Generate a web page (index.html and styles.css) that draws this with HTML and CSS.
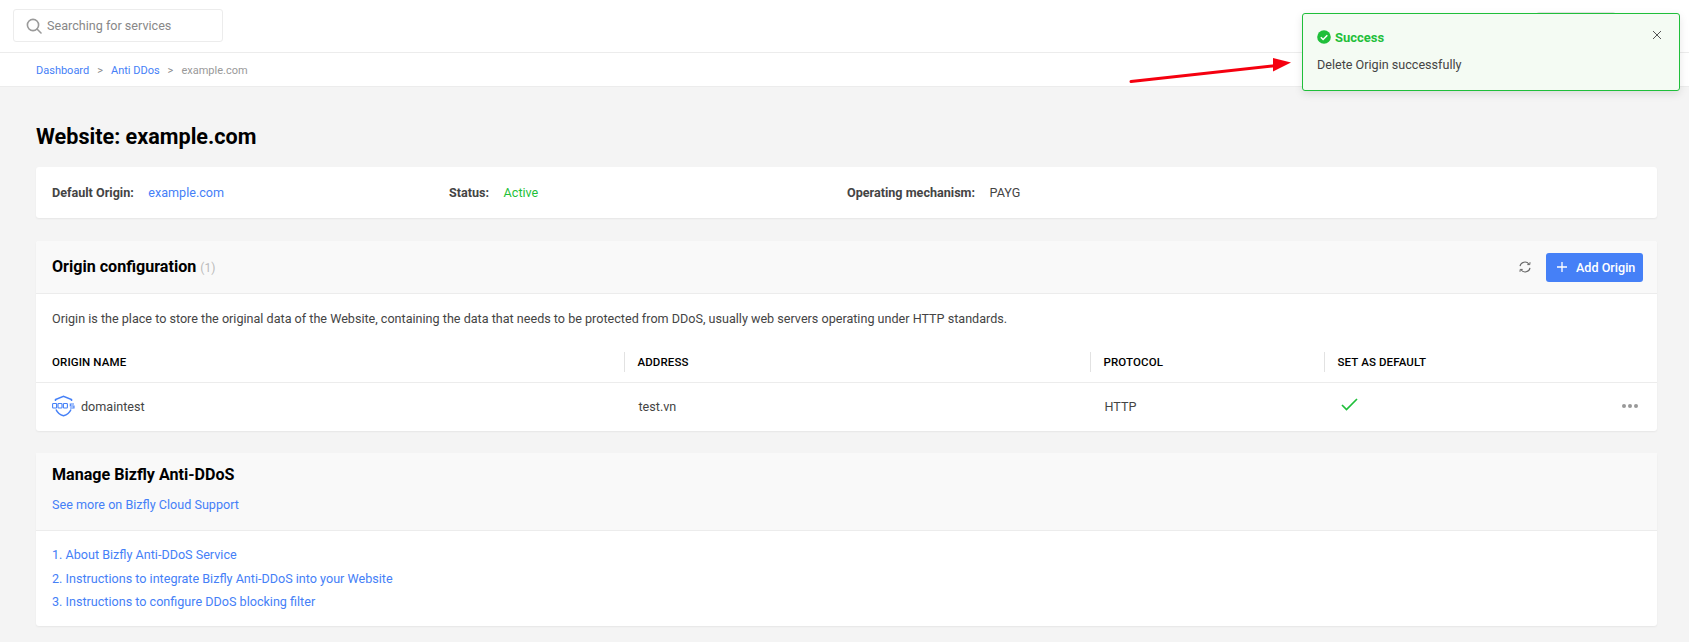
FILE: index.html
```html
<!DOCTYPE html>
<html lang="en">
<head>
<meta charset="utf-8">
<title>Website: example.com</title>
<link rel="stylesheet" href="styles.css">
</head>
<body>
<header class="topbar">
  <div class="search">
    <svg class="search-icon" width="16" height="16" viewBox="0 0 16 16" fill="none" stroke="#9a9a9a" stroke-width="1.6"><circle cx="7" cy="7" r="5.6"/><path d="M11 11l4 4" stroke-linecap="round"/></svg>
    <span>Searching for services</span>
  </div>
  <div class="top-button"></div>
</header>
<nav class="crumbs">
  <a>Dashboard</a><span class="sep">&gt;</span><a>Anti DDos</a><span class="sep">&gt;</span><span class="current">example.com</span>
</nav>
<main class="content">
  <h1 class="title">Website: example.com</h1>
  <section class="card info">
    <div class="info-item"><b>Default Origin:</b><a>example.com</a></div>
    <div class="info-item"><b>Status:</b><span class="active">Active</span></div>
    <div class="info-item"><b>Operating mechanism:</b><span>PAYG</span></div>
  </section>
  <section class="card origin">
    <div class="card-head">
      <h2>Origin configuration <small>(1)</small></h2>
      <div class="actions">
        <svg width="14" height="14" viewBox="0 0 14 14" fill="none" stroke="#666" stroke-width="1.1"><path d="M2 6.2A5 5 0 0 1 11 4.2M12 7.8A5 5 0 0 1 3 9.8"/><path d="M9.3 4.6h2.5l.2-2.4M4.7 9.4H2.2L2 11.8" stroke-width="1"/></svg>
        <button class="add" type="button"><svg width="12" height="12" viewBox="0 0 12 12" stroke="#fff" stroke-width="1.3"><path d="M6 1v10M1 6h10"/></svg>Add Origin</button>
      </div>
    </div>
    <p class="desc">Origin is the place to store the original data of the Website, containing the data that needs to be protected from DDoS, usually web servers operating under HTTP standards.</p>
    <div class="row thead">
      <div>ORIGIN NAME</div><div>ADDRESS</div><div>PROTOCOL</div><div>SET AS DEFAULT</div>
    </div>
    <div class="row tbody">
      <div class="name">
        <svg width="23" height="22" viewBox="0 0 23 22" fill="none" stroke="#4580f7"><path d="M3.500 6V4.500L11.500 1.200 19.500 4.500V6M4 14.500C5.500 18 8.500 20 11.500 20.800c3-.8 6-2.800 7.500-6.300" stroke-width="1.500"/><g stroke-width="1.100"><rect x=".6" y="8.500" width="4" height="4.500" rx=".8"/><rect x="6" y="8.500" width="4" height="4.500" rx=".8"/><rect x="11.400" y="8.500" width="4" height="4.500" rx=".8"/><path d="M22 9h-3.700v2H22v2h-4"/></g></svg>
        <span>domaintest</span>
      </div>
      <div>test.vn</div>
      <div>HTTP</div>
      <div class="default">
        <svg class="check" width="17" height="13" viewBox="0 0 17 13" fill="none" stroke="#1fbf3a" stroke-width="1.700"><path d="M1 7l4.500 4.500L16 1"/></svg>
        <span class="dots"><i></i><i></i><i></i></span>
      </div>
    </div>
  </section>
  <section class="card manage">
    <div class="manage-head">
      <h2>Manage Bizfly Anti-DDoS</h2>
      <a>See more on Bizfly Cloud Support</a>
    </div>
    <ul class="links">
      <li><a>1. About Bizfly Anti-DDoS Service</a></li>
      <li><a>2. Instructions to integrate Bizfly Anti-DDoS into your Website</a></li>
      <li><a>3. Instructions to configure DDoS blocking filter</a></li>
    </ul>
  </section>
</main>
<svg class="arrow" width="170" height="40" viewBox="0 0 170 40"><path d="M4 31.500L150 15.500" stroke="#f5000f" stroke-width="3" stroke-linecap="round"/><path d="M146 8l18 4.500-18 9z" fill="#f5000f"/></svg>
<aside class="toast">
  <div class="toast-head">
    <svg width="14" height="14" viewBox="0 0 14 14"><circle cx="7" cy="7" r="6.800" fill="#1fbf3a"/><path d="M3.800 7.200l2.300 2.300 4.200-4.300" fill="none" stroke="#fff" stroke-width="1.500"/></svg>
    <strong>Success</strong>
    <svg class="close" width="10" height="10" viewBox="0 0 10 10" stroke="#555" stroke-width="1"><path d="M1 1l8 8M9 1l-8 8"/></svg>
  </div>
  <p>Delete Origin successfully</p>
</aside>
</body>
</html>
```
FILE: styles.css
```css
* { box-sizing: border-box; }
html, body { margin: 0; padding: 0; }
body {
  width: 1689px;
  height: 642px;
  overflow: hidden;
  background: #f4f4f4;
  color: #444;
  font-family: Roboto, "Liberation Sans", sans-serif;
  font-size: 12.600px;
}
a { color: #4580f7; }
h1, h2, p, ul { margin: 0; padding: 0; }

.topbar {
  height: 53px;
  background: #fff;
  border-bottom: 1px solid #ececec;
  padding: 9px 13px;
  display: flex;
  justify-content: space-between;
}
.search {
  width: 210px;
  height: 33px;
  border: 1px solid #ececec;
  border-radius: 3px;
  display: flex;
  align-items: center;
  gap: 5px;
  padding-left: 12px;
  color: #888;
}
.top-button {
  width: 80px;
  height: 30px;
  margin: 3px 60px 0 0;
  border: 1px solid #e4e4e4;
  border-radius: 3px;
}
.crumbs {
  height: 34px;
  background: #fff;
  border-bottom: 1px solid #ececec;
  padding: 2px 0 0 36px;
  display: flex;
  align-items: center;
  font-size: 11px;
}
.sep { margin: 0 8px; color: #888; }
.current { color: #999; }

.content { padding: 36px 32px 0 36px; }
.title {
  font-size: 21.600px;
  line-height: 28px;
  font-weight: 700;
  color: #000;
  margin-bottom: 16px;
}
.card {
  background: #fff;
  border-radius: 3px;
  box-shadow: 0 1px 2px rgba(0,0,0,.06);
  margin-bottom: 22px;
}
.info {
  height: 51px;
  margin-bottom: 23px;
  display: grid;
  grid-template-columns: 397px 398px 1fr;
  align-items: center;
  padding-left: 16px;
}
.info-item { display: flex; gap: 14.500px; }
.info-item b { color: #444; font-weight: 700; }
.active { color: #1fbf3a; }

.card-head {
  height: 53px;
  background: #f9f9f9;
  border-bottom: 1px solid #ececec;
  border-radius: 3px 3px 0 0;
  padding: 0 14px 0 16px;
  display: flex;
  align-items: center;
  justify-content: space-between;
}
h2 { font-size: 16.100px; line-height: 24px; font-weight: 700; color: #000; }
h2 small { font-size: 12px; font-weight: 400; color: #bbb; }
.actions { display: flex; align-items: center; gap: 14px; }
.add {
  height: 29px;
  width: 97px;
  border: 0;
  border-radius: 3px;
  background: #4580f7;
  color: #fff;
  font: 500 12.600px Roboto, sans-serif;
  display: flex;
  align-items: center;
  gap: 8px;
  padding: 0 0 0 10px;
}
.desc { padding: 17px 16px 0; line-height: 16px; height: 49px; }
.row { display: grid; grid-template-columns: 588px 466px 234px 1fr; align-items: center; }
.row > div { padding-left: 14.500px; }
.thead {
  height: 40px;
  padding-bottom: 2px;
  border-bottom: 1px solid #ececec;
  color: #000;
  font-size: 11.500px;
  font-weight: 500;
  letter-spacing: .12px;
}
.row.thead > div:first-child { padding-left: 16px; }
.thead > div + div { border-left: 1px solid #e2e2e2; height: 20px; line-height: 20px; padding-left: 12.500px; }
.tbody { height: 48px; padding-bottom: 2px; }
.row > .name { display: flex; align-items: center; gap: 6px; padding-left: 16px; }
.row > .default { display: flex; align-items: center; justify-content: space-between; padding: 0 19px 0 16.500px; }
.check { margin-top: -4px; }
.dots { display: flex; gap: 2px; }
.dots i { width: 4px; height: 4px; border-radius: 50%; background: #999; }

.manage { height: 173px; margin-bottom: 0; }
.manage-head {
  height: 78px;
  background: #f9f9f9;
  border-bottom: 1px solid #ececec;
  padding: 10px 16px 0;
  display: flex;
  flex-direction: column;
  gap: 10px;
}
.links { list-style: none; padding: 12px 16px 0; }
.links li { height: 23.500px; line-height: 23.500px; }

.toast {
  position: absolute;
  left: 1302px;
  top: 13px;
  width: 378px;
  height: 78px;
  background: #f4fbf3;
  border: 1px solid #1fbf3a;
  border-radius: 3px;
  box-shadow: 0 3px 8px rgba(0,0,0,.1);
  padding: 14px 17px 0 14px;
}
.toast-head { display: flex; align-items: center; gap: 4px; height: 18px; }
.toast-head strong { color: #1fbf3a; font-size: 13px; font-weight: 700; }
.close { margin-left: auto; margin-top: -4px; }
.toast p { margin-top: 11px; line-height: 16px; }
.arrow { position: absolute; left: 1127px; top: 50px; }
```
